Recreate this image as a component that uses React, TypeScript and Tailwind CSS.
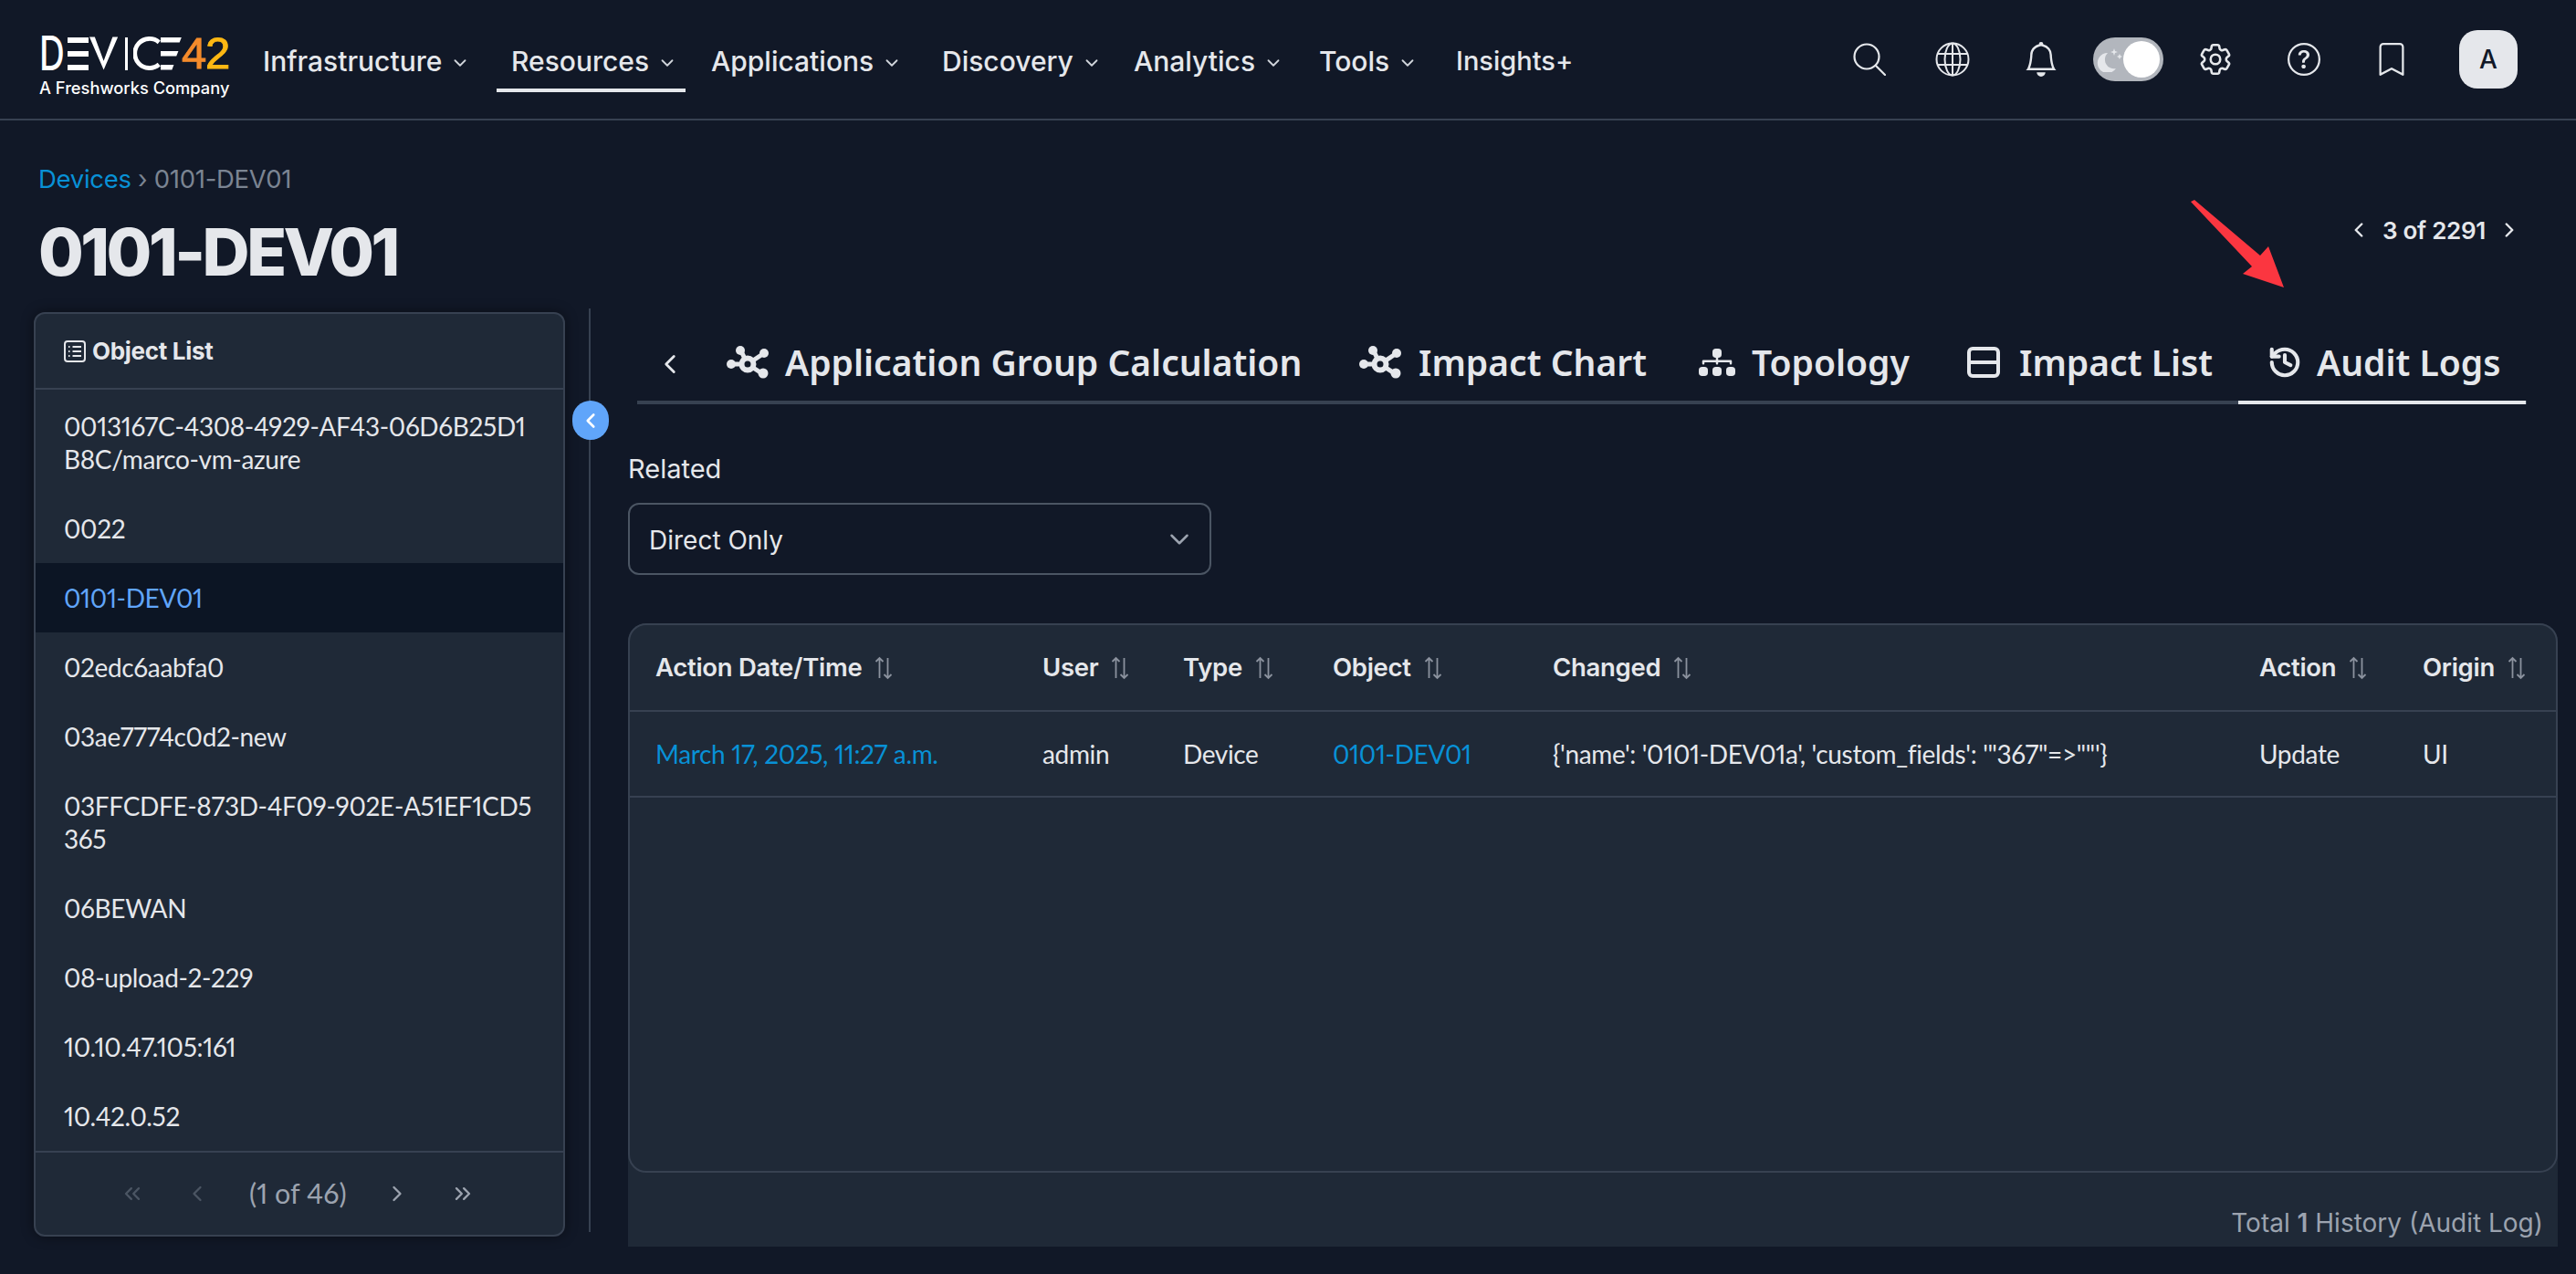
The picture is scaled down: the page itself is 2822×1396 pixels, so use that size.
import { ChevronDown, ChevronLeft, ChevronRight, ChevronsLeft, ChevronsRight, History } from "lucide-react";
import { BsBell, BsBookmark, BsDiagram3Fill, BsQuestionCircle } from "react-icons/bs";
import { HiOutlineCog6Tooth } from "react-icons/hi2";

const navItems = [
  { label: "Infrastructure", width: "w-[272px]", active: false },
  { label: "Resources", width: "w-[219px]", active: true },
  { label: "Applications", width: "w-[253px]", active: false },
  { label: "Discovery", width: "w-[210px]", active: false },
  { label: "Analytics", width: "w-[203px]", active: false },
  { label: "Tools", width: "w-[150px]", active: false },
];

const objects = [
  "0013167C-4308-4929-AF43-06D6B25D1B8C/marco-vm-azure",
  "0022",
  "0101-DEV01",
  "02edc6aabfa0",
  "03ae7774c0d2-new",
  "03FFCDFE-873D-4F09-902E-A51EF1CD5365",
  "06BEWAN",
  "08-upload-2-229",
  "10.10.47.105:161",
  "10.42.0.52",
];

const columns = ["Action Date/Time", "User", "Type", "Object", "Changed", "Action", "Origin"];

function NetworkIcon() {
  return (
    <svg viewBox="0 0 46 36" className="h-[36px] w-[46px]" fill="none">
      <g stroke="#e5e7eb" strokeWidth="5">
        <line x1="15" y1="4" x2="23" y2="20" />
        <line x1="41" y1="8" x2="23" y2="20" />
        <line x1="3" y1="20" x2="23" y2="20" />
        <line x1="40" y1="31" x2="23" y2="20" />
      </g>
      <g fill="#e5e7eb">
        <circle cx="15" cy="5" r="5" />
        <circle cx="41" cy="8" r="5" />
        <circle cx="5" cy="20" r="5" />
        <circle cx="40" cy="30" r="5.5" />
      </g>
      <circle cx="23" cy="20" r="6.5" fill="#111827" stroke="#e5e7eb" strokeWidth="6" />
    </svg>
  );
}

function TableIcon() {
  return (
    <svg viewBox="0 0 36 34" className="h-[34px] w-[36px]" fill="none" stroke="#e5e7eb" strokeWidth="4">
      <rect x="2" y="2" width="32" height="30" rx="4" />
      <line x1="2" y1="17" x2="34" y2="17" />
    </svg>
  );
}

function SortIcon() {
  return (
    <svg viewBox="0 0 20 26" className="h-[26px] w-[20px]" fill="none" stroke="#8b929e" strokeWidth="1.8">
      <path d="M5.5 24V2M1.5 6l4-4 4 4" />
      <path d="M14.5 2v22M10.5 20l4 4 4-4" />
    </svg>
  );
}

function Logo() {
  return (
    <div className="flex w-[208px] shrink-0 flex-col">
      <div className="flex h-[37px] items-center text-[52px] font-medium leading-[37px] text-white">
        <span className="inline-block w-[31px] origin-left scale-x-[0.74]">D</span>
        <div className="flex h-[36px] w-[24px] flex-col justify-between">
          <div className="h-[6px] bg-white" />
          <div className="h-[6px] bg-white" />
          <div className="h-[6px] bg-white" />
        </div>
        <svg viewBox="0 0 32 37" className="ml-[1px] h-[37px] w-[32px]">
          <path d="M0 0h6l10 27L26 0h6L16 37z" fill="#fff" />
        </svg>
        <div className="ml-[7px] h-[36px] w-[4px] bg-white" />
        <svg viewBox="0 0 30 37" className="ml-[6px] h-[37px] w-[30px]" fill="none" stroke="#fff" strokeWidth="5">
          <path d="M29 6A16.5 16.5 0 1 0 29 31" />
        </svg>
        <div className="flex h-[36px] w-[24px] flex-col justify-between">
          <div className="h-[6px] bg-white [clip-path:polygon(0_0,100%_0,90%_100%,0_100%)]" />
          <div className="h-[6px] w-[20px] bg-white [clip-path:polygon(0_0,100%_0,88%_100%,0_100%)]" />
          <div className="h-[6px] w-[15px] bg-white [clip-path:polygon(0_0,100%_0,85%_100%,0_100%)]" />
        </div>
        <span className="w-[26px] font-['Liberation_Sans',sans-serif] text-[49px] font-normal text-[#f58b2b] [-webkit-text-stroke:1px_#f58b2b]">4</span>
        <span className="w-[26px] font-['Liberation_Sans',sans-serif] text-[49px] font-normal text-[#fdb813] [-webkit-text-stroke:1px_#fdb813]">2</span>
      </div>
      <div className="mt-[10px] whitespace-nowrap text-[18.3px] font-medium leading-[18px] text-white">
        A Freshworks Company
      </div>
    </div>
  );
}

export default function App() {
  return (
    <div className="relative h-[1396px] w-[2822px] overflow-hidden bg-[#111827] font-['Inter',sans-serif] text-[#e5e7eb]">
      {/* Top bar */}
      <header className="flex h-[132px] items-start border-b-2 border-[#374151] pl-[43px]">
        <div className="mt-[40px]">
          <Logo />
        </div>
        <nav className="ml-[37px] flex h-[101px] items-stretch">
          {navItems.map((item) => (
            <div key={item.label} className={`relative flex h-full items-center ${item.width}`}>
              <span className="mt-[32px] whitespace-nowrap text-[30px] font-medium leading-[66px] text-[#e5e7eb]">{item.label}</span>
              <ChevronDown size={22} strokeWidth={2} className="ml-[9px] mt-[36px] text-[#d1d5db]" />
              {item.active ? <div className="absolute bottom-0 -left-[16px] h-[4px] w-[207px] bg-[#e5e7eb]" /> : null}
            </div>
          ))}
          <span className="mt-[32px] self-center whitespace-nowrap text-[29px] font-medium leading-[66px] text-[#e5e7eb]">Insights+</span>
        </nav>
        <div className="ml-auto flex h-[130px] items-center pr-[64px] text-[#e5e7eb]">
          <svg viewBox="0 0 36 36" className="h-[36px] w-[36px]" fill="none" stroke="#e5e7eb" strokeWidth="2.2" strokeLinecap="round">
            <circle cx="15" cy="15" r="13.5" />
            <line x1="25" y1="25" x2="35" y2="35" />
          </svg>
          <svg viewBox="0 0 38 38" className="ml-[54px] h-[38px] w-[38px]" fill="none" stroke="#e5e7eb" strokeWidth="2">
            <circle cx="19" cy="19" r="17.5" />
            <ellipse cx="19" cy="19" rx="8.5" ry="17.5" />
            <line x1="19" y1="1.5" x2="19" y2="36.5" />
            <line x1="3" y1="13" x2="35" y2="13" />
            <line x1="3" y1="25" x2="35" y2="25" />
          </svg>
          <BsBell size={38} className="ml-[59px]" />
          <div className="ml-[38px] flex h-[48px] w-[77px] items-center justify-end rounded-full bg-[#b2b6bd] pr-[4px]">
            <svg viewBox="0 0 28 28" className="mr-[1px] h-[28px] w-[28px]" fill="#e5e7eb">
              <path d="M12 7a11 11 0 1 0 9 17 10 10 0 0 1-9-17z" />
              <path d="M19 2l1 3 3 1-3 1-1 3-1-3-3-1 3-1zM25 8l1 2 2 1-2 1-1 2-1-2-2-1 2-1z" />
            </svg>
            <div className="h-[40px] w-[40px] rounded-full bg-white" />
          </div>
          <HiOutlineCog6Tooth size={42} className="ml-[36px]" />
          <BsQuestionCircle size={36} className="ml-[58px]" />
          <BsBookmark size={36} className="ml-[60px]" />
          <div className="ml-[56px] flex h-[64px] w-[64px] items-center justify-center rounded-[20px] bg-[#e5e7eb] text-[28px] font-medium text-[#111827]">
            A
          </div>
        </div>
      </header>

      {/* Title */}
      <div className="flex justify-between pl-[42px] pr-[60px] pt-[44px]">
        <div>
          <div className="text-[27.5px] leading-[40px] tracking-[-0.3px] text-[#7b8492]">
            <span className="text-[#0891d6]">Devices</span> › 0101-DEV01
          </div>
          <h1 className="mt-[20px] text-[72px] font-extrabold leading-[80px] tracking-[-3.5px] text-[#e5e7eb]">0101-DEV01</h1>
        </div>
        <div className="mt-[58px] flex h-[36px] items-center text-[26px] font-semibold tracking-[-0.3px]">
          <ChevronLeft size={26} strokeWidth={2.2} />
          <span className="mx-[13px]">3 of 2291</span>
          <ChevronRight size={26} strokeWidth={2.2} />
        </div>
      </div>

      {/* Arrow annotation */}
      <svg viewBox="0 0 104 98" className="absolute left-[2400px] top-[219px] h-[98px] w-[104px]" fill="#fb3640">
        <path d="M0 2L4 0L76 61L85 51L102 96L57 81L67 73Z" />
      </svg>

      <main className="mt-[26px] flex pl-[37px]">
        {/* Object list */}
        <aside className="flex h-[1013px] w-[582px] shrink-0 flex-col rounded-[12px] border-2 border-[#374151] bg-[#1f2937] shadow-[0_0_14px_rgba(0,0,0,0.45)]">
          <div className="flex h-[83px] shrink-0 items-center gap-[7px] border-b-2 border-[#374151] pl-[31px]">
            <svg viewBox="0 0 24 24" className="h-[24px] w-[24px]" fill="none" stroke="#e5e7eb" strokeWidth="2">
              <rect x="1" y="1" width="22" height="22" rx="3" />
              <path d="M9.5 7H19M9.5 12H19M9.5 17H19M5 7h1.5M5 12h1.5M5 17h1.5" />
            </svg>
            <span className="text-[26px] font-bold tracking-[-0.3px]">Object List</span>
          </div>
          <ul className="flex-1 pt-[2px] font-['Lato',sans-serif] text-[28px] leading-[36px] tracking-[-0.35px] [font-variant-numeric:proportional-nums]">
            {objects.map((name) => (
              <li
                key={name}
                className={
                  name === "0101-DEV01"
                    ? "break-all bg-[#0c1524] py-[20px] pl-[31px] pr-[28px] text-[#60a5fa]"
                    : "break-all py-[20px] pl-[31px] pr-[28px] text-[#e5e7eb]"
                }
              >
                {name}
              </li>
            ))}
          </ul>
          <div className="flex h-[92px] shrink-0 items-center border-t-2 border-[#374151] pl-[92px] text-[#9ca3af]">
            <ChevronsLeft size={28} className="text-[#4b5563]" />
            <ChevronLeft size={28} className="ml-[43px] text-[#4b5563]" />
            <span className="ml-[43px] font-['Lato',sans-serif] text-[30.5px] [font-variant-numeric:proportional-nums]">(1 of 46)</span>
            <ChevronRight size={28} className="ml-[41px]" />
            <ChevronsRight size={28} className="ml-[44px]" />
          </div>
        </aside>

        {/* Divider and collapse button */}
        <div className="relative ml-[26px] -mt-[4px] h-[1012px] w-[2px] shrink-0 bg-[#374151]">
          <div className="absolute -left-[18px] top-[101px] flex h-[43px] w-[40px] items-center justify-center rounded-full bg-[#60a5fa]">
            <ChevronLeft size={26} strokeWidth={2.4} className="text-white" />
          </div>
        </div>

        {/* Detail */}
        <section className="ml-[41px] w-[2114px] shrink-0">
          <div className="ml-[10px] flex h-[101px] w-[2070px] items-stretch border-b-4 border-[#374151]">
            <div className="flex w-[66px] items-center justify-start pl-[19px] pt-[17px]">
              <ChevronLeft size={34} strokeWidth={2} />
            </div>
            <Tab label="Application Group Calculation" width="w-[693px]" iconBox="w-[64px]" icon={<NetworkIcon />} />
            <Tab label="Impact Chart" width="w-[372px]" iconBox="w-[65px]" icon={<NetworkIcon />} />
            <Tab label="Topology" width="w-[294px]" iconBox="w-[58px]" icon={<BsDiagram3Fill size={40} />} />
            <Tab label="Impact List" width="w-[329px]" iconBox="w-[57px]" icon={<TableIcon />} />
            <Tab label="Audit Logs" width="w-[315px]" iconBox="w-[54px]" icon={<History size={38} strokeWidth={2.6} />} active />
          </div>

          <div className="mt-[50px] text-[29px] leading-[42px]">Related</div>
          <div className="mt-[16px] flex h-[79px] w-[639px] items-center justify-between rounded-[12px] border-2 border-[#4b5563] pl-[21px] pr-[16px]">
            <span className="mt-[2px] text-[28px]">Direct Only</span>
            <ChevronDown size={34} strokeWidth={1.8} className="text-[#9ca3af]" />
          </div>

          <div className="mt-[53px] h-[683px] rounded-t-[20px] bg-[#1f2937]">
            <div className="h-[602px] rounded-[20px] border-2 border-[#374151]">
              <div className="grid h-[95px] grid-cols-[424px_154px_164px_241px_774px_179px_1fr] items-center border-b-2 border-[#374151] pl-[28px]">
                {columns.map((col) => (
                  <div key={col} className="flex items-center gap-[14px] whitespace-nowrap text-[27.5px] font-semibold tracking-[-0.3px]">
                    {col}
                    <SortIcon />
                  </div>
                ))}
              </div>
              <div className="grid h-[94px] grid-cols-[424px_154px_164px_241px_774px_179px_1fr] items-center border-b-2 border-[#374151] pl-[28px] font-['Lato',sans-serif] text-[28px] tracking-[-0.35px] [font-variant-numeric:proportional-nums]">
                <div className="text-[#0891d6]">March 17, 2025, 11:27 a.m.</div>
                <div>admin</div>
                <div>Device</div>
                <div className="text-[#0891d6]">0101-DEV01</div>
                <div className="whitespace-nowrap">{"{'name': '0101-DEV01a', 'custom_fields': '\"367\"=>\"\"'}"}</div>
                <div>Update</div>
                <div>UI</div>
              </div>
            </div>
            <div className="flex h-[81px] items-end justify-end pb-[6px] pr-[16px] text-[28px] leading-[40px] text-[#9ca3af]">
              <span>
                Total <b className="font-semibold">1</b> History (Audit Log)
              </span>
            </div>
          </div>
        </section>
      </main>
    </div>
  );
}

function Tab({ label, icon, width, iconBox, active }: { label: string; icon: React.ReactNode; width: string; iconBox: string; active?: boolean }) {
  return (
    <div className={`relative flex items-center pl-[32px] pt-[13px] ${width}`}>
      <div className={`shrink-0 ${iconBox}`}>{icon}</div>
      <span className="whitespace-nowrap font-['Noto_Sans',sans-serif] text-[39px] font-semibold leading-[50px] text-[#e5e7eb]">{label}</span>
      {active ? <div className="absolute -bottom-[4px] left-0 right-0 h-[4px] bg-[#e5e7eb]" /> : null}
    </div>
  );
}
